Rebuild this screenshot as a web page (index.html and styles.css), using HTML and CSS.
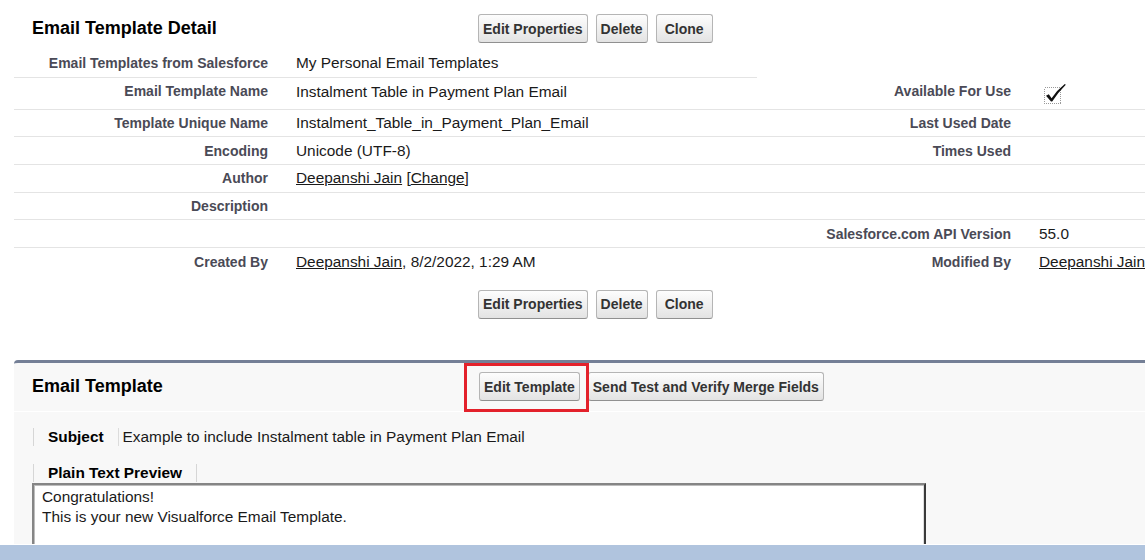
FILE: index.html
```html
<!DOCTYPE html>
<html lang="en">

<head>
    <meta charset="UTF-8">
    <meta name="viewport" content="width=device-width, initial-scale=1.0">
    <title>Email Template Detail</title>

    <!-- CSS Styles -->
    <link rel="stylesheet" href="styles.css">
</head>

<body>
    <div class="page">

        <!-- Detail block -->
        <div class="block-header">
            <h2 class="block-title">Email Template Detail</h2>
            <div class="btn-row">
                <button class="btn">Edit Properties</button>
                <button class="btn">Delete</button>
                <button class="btn wide">Clone</button>
            </div>
        </div>

        <div class="detail-grid">
            <div class="cell lbl line">Email Templates from Salesforce</div>
            <div class="cell val line">My Personal Email Templates</div>
            <div class="cell"></div>
            <div class="cell"></div>

            <div class="cell lbl line top">Email Template Name</div>
            <div class="cell val line top">Instalment Table in Payment Plan Email</div>
            <div class="cell lbl line top">Available For Use</div>
            <div class="cell val line">
                <svg class="checkbox" width="28" height="24" viewBox="0 0 28 24" shape-rendering="crispEdges">
                    <rect x="5.5" y="6.5" width="16" height="16" fill="none" stroke="#9a9a9a" stroke-dasharray="1 1"/>
                    <path d="M7 14.8 L9.8 13.2 L12.6 17.2 Q18 9 25.8 3 L26.8 3.8 Q19 11.5 13.2 20.6 L12 20.6 Z" fill="#111" shape-rendering="geometricPrecision"/>
                </svg>
            </div>

            <div class="cell lbl line">Template Unique Name</div>
            <div class="cell val line">Instalment_Table_in_Payment_Plan_Email</div>
            <div class="cell lbl line">Last Used Date</div>
            <div class="cell val line"></div>

            <div class="cell lbl line">Encoding</div>
            <div class="cell val line">Unicode (UTF-8)</div>
            <div class="cell lbl line">Times Used</div>
            <div class="cell val line"></div>

            <div class="cell lbl line">Author</div>
            <div class="cell val line"><a href="#">Deepanshi Jain</a>&nbsp;[<a href="#">Change</a>]</div>
            <div class="cell lbl line"></div>
            <div class="cell val line"></div>

            <div class="cell lbl line">Description</div>
            <div class="cell val line"></div>
            <div class="cell lbl line"></div>
            <div class="cell val line"></div>

            <div class="cell lbl line"></div>
            <div class="cell val line"></div>
            <div class="cell lbl line">Salesforce.com API Version</div>
            <div class="cell val line">55.0</div>

            <div class="cell lbl">Created By</div>
            <div class="cell val"><a href="#">Deepanshi Jain</a>, 8/2/2022, 1:29 AM</div>
            <div class="cell lbl">Modified By</div>
            <div class="cell val"><a href="#">Deepanshi Jain</a>, 8/2/2022, 1:29 AM</div>
        </div>

        <div class="btn-row bottom-btns">
            <button class="btn">Edit Properties</button>
            <button class="btn">Delete</button>
            <button class="btn wide">Clone</button>
        </div>

        <!-- Email template block -->
        <div class="template-block">
            <div class="tpl-header">
                <h2 class="tpl-title">Email Template</h2>
                <div class="btn-row">
                    <div class="highlight">
                        <button class="btn">Edit Template</button>
                        <span class="highlight-box"></span>
                    </div>
                    <button class="btn">Send Test and Verify Merge Fields</button>
                </div>
            </div>

            <div class="field-row">
                <span class="field-label">Subject</span>
                <span class="field-value">Example to include Instalment table in Payment Plan Email</span>
            </div>

            <div class="preview-tab">Plain Text Preview</div>
            <div class="preview-box">
                Congratulations!<br>
                This is your new Visualforce Email Template.
            </div>
        </div>
    </div>

    <div class="bottom-band"></div>
</body>

</html>
```

FILE: styles.css
```css
/* Colours used across the page */
:root {
    --label-color: #4a4a56;
    --line-color: #e4e4e4;
    --block-bg: #f8f8f8;
    --block-border: #747f96;
    --band-color: #b0c4de;
    --mark-red: #e3212b;
}

html, body {
    margin: 0;
    padding: 0;
    overflow: hidden;
}

body {
    background: #fff;
    color: #000;
    font-family: "Liberation Sans", Arial, sans-serif;
}

.page {
    width: 1400px;
    padding-left: 14px;
}

a {
    color: #1a1a1a;
    text-decoration: underline;
}

/* Header of the detail block */
.block-header {
    display: flex;
    align-items: center;
    padding: 14px 0 7px;
}

.block-title {
    width: 464px;
    box-sizing: border-box;
    padding-left: 18px;
    margin: 0;
    font-size: 18px;
    font-weight: bold;
}

.btn-row {
    display: flex;
    gap: 8px;
}

.btn {
    height: 29px;
    padding: 0 4px;
    border: 1px solid #b5b5b5;
    border-bottom-color: #909090;
    border-radius: 3px;
    background: linear-gradient(#fdfdfd, #e3e3e3);
    color: #333;
    font-family: inherit;
    font-size: 14px;
    font-weight: bold;
}

.btn.wide {
    padding: 0 8px;
}

.bottom-btns {
    margin: 14px 0 0 464px;
}

/* Detail rows */
.detail-grid {
    display: grid;
    grid-template-columns: 268px 475px 268px 400px;
    grid-template-rows: 27.7px 32px repeat(6, 27.7px);
}

.cell {
    display: flex;
    align-items: center;
    box-sizing: border-box;
    padding: 0 14px;
    white-space: nowrap;
}

.cell.line {
    border-bottom: 1px solid var(--line-color);
}

.cell.top {
    align-items: flex-start;
    padding-top: 5px;
}

.lbl {
    justify-content: flex-end;
    color: var(--label-color);
    font-size: 14px;
    font-weight: bold;
}

.val {
    font-size: 15.4px;
    color: #1a1a1a;
}

.checkbox {
    display: block;
}

/* Email template block */
.template-block {
    margin-top: 41px;
    height: 184px;
    box-sizing: border-box;
    border-top: 3px solid var(--block-border);
    border-top-left-radius: 4px;
    background: var(--block-bg);
    overflow: hidden;
}

.tpl-header {
    display: flex;
    align-items: center;
    height: 48px;
    border-bottom: 1px solid #fff;
}

.tpl-title {
    width: 465px;
    box-sizing: border-box;
    padding-left: 18px;
    margin: 0;
    font-size: 18px;
    font-weight: bold;
}

/* Red annotation around Edit Template */
.highlight {
    position: relative;
}

.highlight .btn {
    display: block;
}

.highlight-box {
    position: absolute;
    left: -15px;
    top: -9px;
    width: 125px;
    height: 49px;
    box-sizing: border-box;
    border: 3px solid var(--mark-red);
}

.field-row {
    display: flex;
    margin: 16px 0 0 19px;
    height: 18px;
    line-height: 18px;
    border-left: 1px solid #d6d6d6;
    font-size: 15.4px;
}

.field-label {
    padding: 0 14px;
    border-right: 1px solid #dcdcdc;
    font-weight: bold;
}

.field-value {
    padding-left: 4px;
    color: #1a1a1a;
}

.preview-tab {
    display: inline-block;
    margin: 18px 0 0 19px;
    height: 18px;
    line-height: 18px;
    padding: 0 14px;
    border-left: 1px solid #d6d6d6;
    border-right: 1px solid #d6d6d6;
    font-size: 15.4px;
    font-weight: bold;
}

.preview-box {
    margin: 1px 0 0 18px;
    width: 894px;
    height: 90px;
    box-sizing: border-box;
    padding: 2px 8px;
    border-top: 2px solid #858585;
    border-left: 2px solid #858585;
    border-right: 2px solid #3a3a3a;
    box-shadow: inset 1px 1px 0 #bdbdbd, inset -1px 0 0 #dedede;
    background: #fff;
    color: #1a1a1a;
    font-size: 15.4px;
    line-height: 20px;
}

.bottom-band {
    height: 15px;
    margin-top: 1px;
    background: var(--band-color);
}
```
